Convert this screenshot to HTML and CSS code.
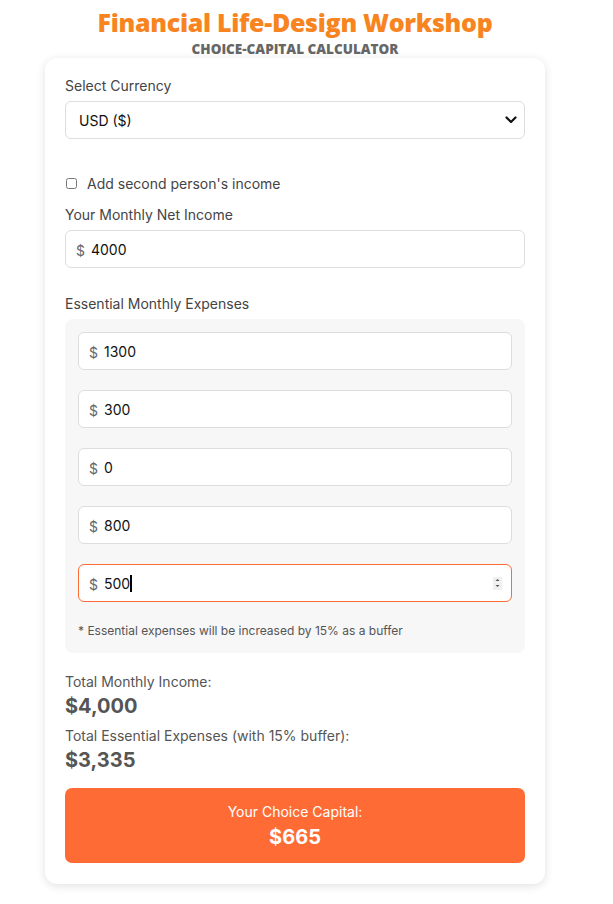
FILE: index.html
```html
<!DOCTYPE html>
<html lang="en">
<head>
<meta charset="utf-8">
<title>Choice-Capital Calculator</title>
<link rel="stylesheet" href="styles.css">
</head>
<body>
<div class="page">
  <header class="header">
    <h1 class="title">Financial Life-Design Workshop</h1>
    <p class="subtitle">CHOICE-CAPITAL CALCULATOR</p>
  </header>
  <main class="card">
    <div class="group">
      <label class="label" for="currency">Select Currency</label>
      <div class="select-wrap">
        <select id="currency" class="select">
          <option>USD ($)</option>
          <option>EUR (€)</option>
          <option>GBP (£)</option>
        </select>
        <svg class="chev" width="12" height="8" viewBox="0 0 12 8" aria-hidden="true"><path d="M1.5 1.5 L6 6 L10.5 1.5" fill="none" stroke="#111" stroke-width="2.2" stroke-linecap="round" stroke-linejoin="round"/></svg>
      </div>
    </div>
    <label class="check-row">
      <input type="checkbox" class="checkbox">
      <span>Add second person's income</span>
    </label>
    <div class="group">
      <label class="label">Your Monthly Net Income</label>
      <div class="field"><span class="cur">$</span><input class="num" type="number" value="4000"></div>
    </div>
    <div class="group expenses-group">
      <label class="label">Essential Monthly Expenses</label>
      <div class="expenses">
        <div class="field"><span class="cur">$</span><input class="num" type="number" value="1300"></div>
        <div class="field"><span class="cur">$</span><input class="num" type="number" value="300"></div>
        <div class="field"><span class="cur">$</span><input class="num" type="number" value="0"></div>
        <div class="field"><span class="cur">$</span><input class="num" type="number" value="800"></div>
        <div class="field active"><span class="cur">$</span><span class="typed">500</span><span class="caret"></span><span class="spin"><svg width="5" height="12" viewBox="0 0 5 12" aria-hidden="true"><path d="M0.5 4 L2.5 2 L4.5 4 Z M0.5 8 L2.5 10 L4.5 8 Z" fill="#555"/></svg></span></div>
        <p class="note">* Essential expenses will be increased by 15% as a buffer</p>
      </div>
    </div>
    <div class="totals">
      <div class="total">
        <div class="total-label">Total Monthly Income:</div>
        <div class="total-value">$4,000</div>
      </div>
      <div class="total">
        <div class="total-label">Total Essential Expenses (with 15% buffer):</div>
        <div class="total-value">$3,335</div>
      </div>
    </div>
    <div class="result">
      <div class="result-label">Your Choice Capital:</div>
      <div class="result-value">$665</div>
    </div>
  </main>
</div>
</body>
</html>
```
FILE: styles.css
```css
* { box-sizing: border-box; }
html, body { margin: 0; background: #ffffff; }
body {
  font-family: Inter, "Noto Sans", sans-serif;
  color: #444;
  padding: 0 23px 0 0;
}
.page {
  width: 500px;
  margin: 0 auto;
  padding: 8px 0 21px;
}
.header { text-align: center; }
.title {
  margin: 0;
  font-family: "Open Sans", sans-serif;
  font-weight: 800;
  font-size: 25px;
  line-height: 28px;
  color: #F7841E;
  letter-spacing: -0.3px;
}
.subtitle {
  margin: 4px 0 0;
  font-family: "Open Sans", sans-serif;
  font-weight: 800;
  font-size: 13.5px;
  line-height: 18px;
  color: #666;
}
.card {
  margin-top: 0;
  background: #fff;
  border-radius: 12px;
  box-shadow: 0 2px 10px rgba(0,0,0,0.12);
  padding: 19px 20px 21px;
  display: flex;
  flex-direction: column;
}
.group { display: flex; flex-direction: column; }
.label {
  font-size: 14px;
  line-height: 17px;
  color: #444;
  margin-bottom: 7px;
}
.select-wrap { position: relative; }
.select {
  -webkit-appearance: none;
  appearance: none;
  width: 100%;
  height: 38px;
  border: 1px solid #ddd;
  border-radius: 6px;
  background: #fff;
  font-family: Inter, sans-serif;
  font-size: 14px;
  color: #111;
  padding: 0 13px;
}
.chev {
  position: absolute;
  right: 8px;
  top: 15px;
  pointer-events: none;
}
.check-row {
  display: flex;
  align-items: center;
  gap: 10px;
  margin: 36px 0 14px;
  font-size: 14px;
  line-height: 17px;
  color: #444;
}
.checkbox { margin: 0 0 0 1px; width: 11px; height: 11px; }
.field {
  display: flex;
  align-items: center;
  height: 38px;
  border: 1px solid #ddd;
  border-radius: 6px;
  background: #fff;
  padding: 0 8px 0 10px;
}
.field.active { border-color: #FF6B35; }
.cur {
  font-size: 14px;
  color: #666;
  margin-right: 6px;
  padding-top: 3px;
}
.num {
  flex: 1;
  min-width: 0;
  border: 0;
  outline: none;
  background: transparent;
  font-family: Inter, sans-serif;
  font-size: 14px;
  color: #111;
  padding: 0;
  height: 30px;
}
.typed { font-size: 14px; color: #111; }
.caret {
  width: 2px;
  height: 17px;
  background: #000;
}
.spin {
  margin-left: auto;
  width: 9px;
  height: 13px;
  background: #f0f0f0;
  display: flex;
  align-items: center;
  justify-content: center;
  margin-right: 1px;
}
.expenses-group { margin-top: 27px; }
.expenses {
  background: #f7f7f7;
  border-radius: 8px;
  padding: 13px 13px 15px;
  display: flex;
  flex-direction: column;
  gap: 20px;
}
.note {
  margin: 0;
  font-size: 12px;
  line-height: 15px;
  color: #555;
  padding-top: 1px;
}
.totals {
  margin-top: 20px;
  display: flex;
  flex-direction: column;
  gap: 8px;
}
.total-label { font-size: 14px; line-height: 17px; color: #555; }
.total-value {
  font-size: 20px;
  font-weight: 700;
  line-height: 26px;
  color: #555;
  margin-top: 3px;
}
.result {
  margin-top: 15px;
  background: #FF6B35;
  border-radius: 7px;
  color: #fff;
  text-align: center;
  padding: 15px 0 12px;
}
.result-label { font-size: 14px; line-height: 18px; }
.result-value { font-size: 20px; font-weight: 700; line-height: 28px; margin-top: 2px; }
```
